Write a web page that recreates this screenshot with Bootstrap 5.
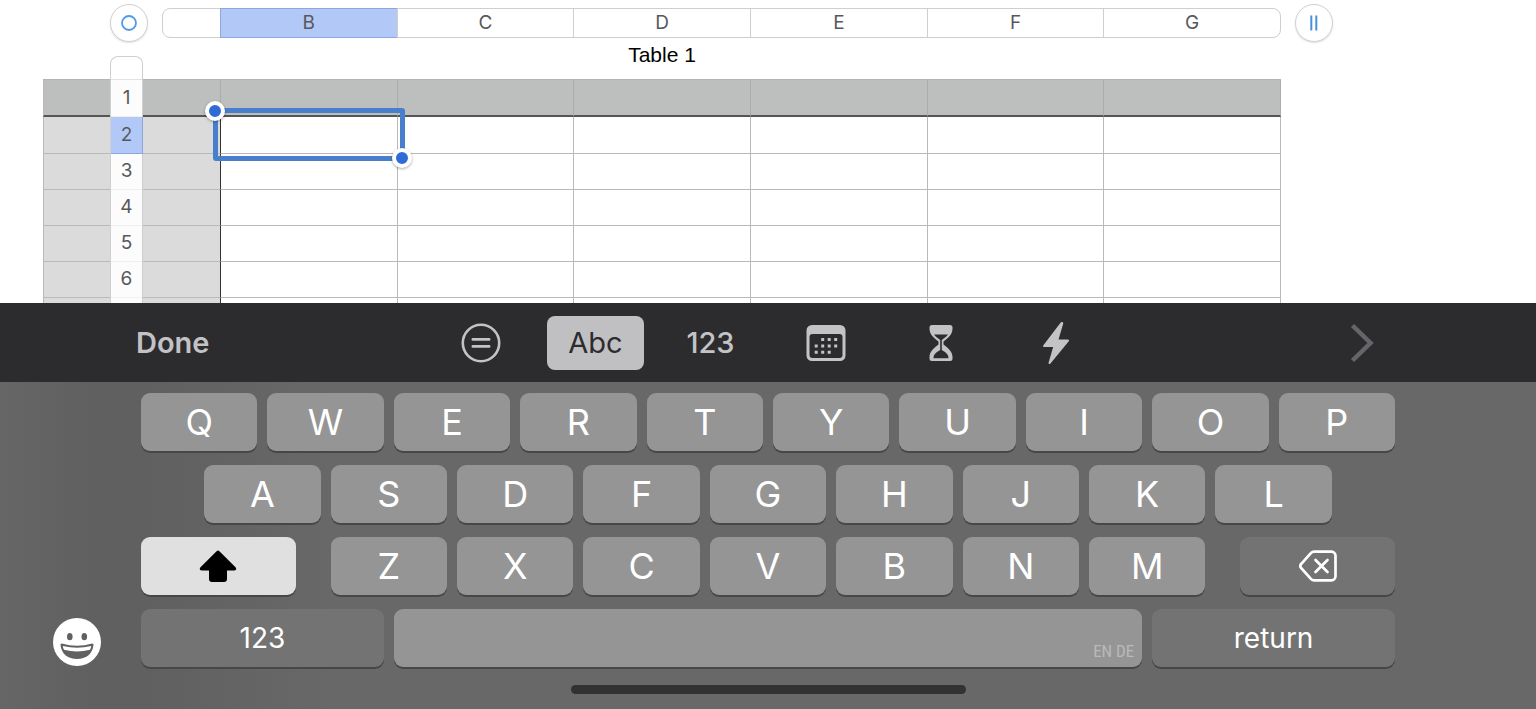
<!DOCTYPE html>
<html lang="en">
<head>
<meta charset="utf-8">
<meta name="viewport" content="width=device-width, initial-scale=1">
<title>Table 1</title>
<link href="https://cdn.jsdelivr.net/npm/bootstrap@5.3.0/dist/css/bootstrap.min.css" rel="stylesheet">
<style>
  body { font-family: Inter, Roboto, sans-serif; background: #fff; color: #58585c; }
  button { font-family: inherit; }

  /* Spreadsheet */
  .sheet { min-height: 0; }
  .ruler { padding: 4px 203px 0 110px; }
  .round-btn { width: 38px; height: 38px; background: #fff; border: 1px solid #d2d2d4; box-shadow: 0 1px 2px #0002; }
  .round-btn svg { flex-shrink: 0; }
  .columns-bar { height: 30px; margin: 0 14px; border: 1px solid #cfcfd1; border-radius: 8px; }
  .columns-bar button { border: 0; border-left: 1px solid #cfcfd1; background: transparent; color: inherit; font-size: 19px; line-height: 28px; flex: 1 1 0; min-width: 0; padding: 0; }
  .columns-bar button:first-child { flex: 0 0 57px; border-left: 0; }
  .columns-bar button.picked, .row-strip button.picked { background: #b2c9f8; border-color: #8ea6dc; box-shadow: 1px 0 0 #8ea6dc; }
  .columns-bar button.picked { box-shadow: 1px 0 0 #8ea6dc, 0 1px 0 #8ea6dc, 0 -1px 0 #8ea6dc; }
  .sheet-title { font: 21px/26px "Liberation Sans", sans-serif; color: #000; margin: 0 0 11px; }
  .grid-wrap { margin: 0 255px 0 43px; }
  .cells { width: 100%; table-layout: fixed; border-collapse: separate; border-spacing: 0; border-top: 1px solid #b4b5b4; }
  .cells th, .cells td { height: 36px; padding: 0; border: 0 solid #b9b9b9; border-width: 0 1px 1px 0; }
  .cells col:first-child { width: 178px; }
  .cells thead th { height: 37px; background: #bcbfbd; border-bottom: 2px solid #555; border-right-color: #abadac; }
  .cells tbody th { background: #dbdbdb; border-right-color: #333; }
  .cells tr > :first-child { border-left: 1px solid #b9b9b9; }
  .cells tbody tr:first-child > * { height: 37px; }
  .selection { inset: -9px -8px -8px -8px; border: 5px solid #477fcc; border-radius: 3px; z-index: 3; }
  .grip { width: 20px; height: 20px; border: 4px solid #fff; background: #2f6ad9; box-shadow: 0 1px 3px #0005; }
  .grip-start { left: -13px; top: -12px; }
  .grip-end { right: -12px; bottom: -12px; }
  .row-strip { left: 67px; top: -23px; width: 33px; border: 1px solid #cfcfd1; border-bottom: 0; border-radius: 8px 8px 0 0; background: #fcfcfc; z-index: 2; }
  .row-strip button { border: 0; border-bottom: 1px solid #f0f0f0; background: transparent; color: inherit; padding: 0; font-size: 19px; height: 36px; }
  .row-strip .strip-cap { height: 23px; border-bottom: 1px solid #e2e2e2; border-radius: 8px 8px 0 0; background: #fff; }
  .row-strip .tall { height: 37px; }

  /* Input toolbar */
  .input-bar { height: 79px; background: #2c2c2e; color: #c3c3c6; padding: 0 136px; }
  .input-bar button { border: 0; background: transparent; color: inherit; padding: 0; }
  .done { font-size: 29px; font-weight: 600; }
  .kinds { width: 690px; }
  .kind { flex: 1 1 0; height: 54px; font-size: 29px; font-weight: 500; }
  .kinds .chosen { width: 97px; height: 54px; border-radius: 8px; background: #c0c0c3; color: #2c2c2e; }
  .side { flex: 1 1 0; }
  .next-btn { margin-right: 24px; }

  /* Keyboard */
  .keyboard { background: #686868 linear-gradient(90deg, #666 0, #606060 90px, #606060 150px, #686868 330px); padding-top: 11px; }
  .gutter { flex: 0 0 141px; }
  .gutter button { border: 0; background: transparent; padding: 0; width: 48px; height: 48px; margin: 0 0 1px 53px; }
  .keys { display: grid; grid-template-columns: repeat(20, minmax(0, 1fr)); column-gap: 10px; row-gap: 14px; }
  .key { grid-column: span 2; height: 58px; border: 0; border-radius: 9px; padding: 0; background: #959595; color: #fff; font-size: 36px; font-weight: 400; line-height: 58px; box-shadow: 0 2px 0 #474747; }
  .key-inset { grid-column: 2 / span 2; }
  .key-edge { grid-column: span 3; }
  .key-shift { background: #e0e0e0; margin-right: 25px; }
  .key-dark { background: #737373; font-size: 28px; }
  .key-delete { margin-left: 25px; }
  .key-wide { grid-column: span 4; }
  .key-first { grid-column: 1 / span 4; }
  .key-space { grid-column: span 12; font: 17px/24px "Liberation Sans Narrow", "Roboto Condensed", sans-serif; color: #b9b9b9; }
  .key-row-start { grid-column: 1 / span 3; }
  .home-line { width: 395px; height: 9px; background: #323232; margin: 18px auto 15px; }
</style>
</head>
<body class="vh-100 d-flex flex-column overflow-hidden">

<main class="sheet flex-fill overflow-hidden">
  <div class="ruler d-flex align-items-center">
    <button class="round-btn rounded-circle p-0 flex-shrink-0 d-flex align-items-center justify-content-center" aria-label="Table options">
      <svg width="16" height="16" viewBox="0 0 16 16"><circle cx="8" cy="8" r="7" fill="none" stroke="#4f9be8" stroke-width="1.8"/></svg>
    </button>
    <div class="columns-bar d-flex flex-fill">
      <button aria-label="Column A"></button><button class="picked">B</button><button>C</button><button>D</button><button>E</button><button>F</button><button>G</button>
    </div>
    <button class="round-btn rounded-circle p-0 flex-shrink-0 d-flex align-items-center justify-content-center" aria-label="Add columns">
      <svg width="16" height="16" viewBox="0 0 16 16"><path d="M5.300 .5v15M10.300 .5v15" stroke="#4690dc" stroke-width="2"/></svg>
    </button>
  </div>
  <div class="grid-wrap">
    <h1 class="sheet-title text-center">Table 1</h1>
    <div class="position-relative">
      <table class="cells">
        <colgroup><col><col><col><col><col><col><col></colgroup>
        <thead><tr><th></th><th></th><th></th><th></th><th></th><th></th><th></th></tr></thead>
        <tbody>
          <tr><th></th><td class="position-relative"><div class="selection position-absolute"><span class="grip grip-start position-absolute rounded-circle"></span><span class="grip grip-end position-absolute rounded-circle"></span></div></td><td></td><td></td><td></td><td></td><td></td></tr>
          <tr><th></th><td></td><td></td><td></td><td></td><td></td><td></td></tr>
          <tr><th></th><td></td><td></td><td></td><td></td><td></td><td></td></tr>
          <tr><th></th><td></td><td></td><td></td><td></td><td></td><td></td></tr>
          <tr><th></th><td></td><td></td><td></td><td></td><td></td><td></td></tr>
          <tr><th></th><td></td><td></td><td></td><td></td><td></td><td></td></tr>
        </tbody>
      </table>
      <div class="row-strip position-absolute d-flex flex-column">
        <span class="strip-cap"></span>
        <button class="tall">1</button><button class="tall picked">2</button><button>3</button><button>4</button><button>5</button><button>6</button><button aria-label="Row 7"></button>
      </div>
    </div>
  </div>
</main>

<nav class="input-bar d-flex align-items-center flex-shrink-0" aria-label="Input type">
  <div class="side"><button class="done">Done</button></div>
  <div class="kinds d-flex align-items-center">
    <button class="kind d-flex align-items-center justify-content-center" aria-label="Formula"><svg width="40" height="40" viewBox="0 0 40 40" fill="none" stroke="currentColor" stroke-width="2.600"><circle cx="20" cy="20" r="18.200"/><path d="M11.800 16.400h16.400M11.800 23.400h16.400" stroke-linecap="round"/></svg></button>
    <div class="kind d-flex justify-content-center"><button class="chosen">Abc</button></div>
    <button class="kind">123</button>
    <button class="kind d-flex align-items-center justify-content-center" aria-label="Date"><svg width="40" height="36" viewBox="0 0 40 36" fill="currentColor"><path fill-rule="evenodd" d="M6 0h28a5.500 5.500 0 0 1 5.500 5.500v25a5.500 5.500 0 0 1-5.500 5.500H6A5.500 5.500 0 0 1 .5 30.500v-25A5.500 5.500 0 0 1 6 0zM6.500 9a3 3 0 0 0-3 3v18a3 3 0 0 0 3 3h27a3 3 0 0 0 3-3V12a3 3 0 0 0-3-3z"/><path d="M15.200 14.500h3M21.700 14.500h3M28.200 14.500h3M8.700 21h3M15.200 21h3M21.700 21h3M28.200 21h3M8.700 27.300h3M15.200 27.300h3M21.700 27.300h3" stroke="currentColor" stroke-width="3"/></svg></button>
    <button class="kind d-flex align-items-center justify-content-center" aria-label="Duration"><svg width="24" height="36" viewBox="0 0 24 36" fill="currentColor"><path fill-rule="evenodd" d="M3 0h18a2.500 2.500 0 0 1 2.500 2.500v1C23.500 9 20 12.500 14.500 16.500v3C20 23.500 23.500 27 23.500 32v1.500A2.500 2.500 0 0 1 21 36H3a2.500 2.500 0 0 1-2.500-2.500V32c0-5 3.500-8.500 9-12.500v-3C4 12.500.5 9 .5 3.500v-1A2.500 2.500 0 0 1 3 0zM5 9.500c1.500 2 3.500 3.500 6.200 5.600v10C8 27 4.500 29 4.500 33.300h15c0-4.300-3.500-6.300-6.700-8.200v-10c2.700-2.100 4.700-3.600 6.200-5.600z"/></svg></button>
    <button class="kind d-flex align-items-center justify-content-center" aria-label="Actions"><svg width="28" height="44" viewBox="0 0 28 44"><path d="M19.500 2 2 25h10.500L7.500 42 26 19.500H15.200L20.300 2.300z" fill="currentColor" stroke="currentColor" stroke-width="2" stroke-linejoin="round"/></svg></button>
  </div>
  <div class="side d-flex justify-content-end"><button class="next-btn" aria-label="Next"><svg class="d-block" width="28" height="40" viewBox="0 0 28 40" fill="none"><path d="M4.500 2.500 22.500 20 4.500 37.500" stroke="#66666a" stroke-width="4.500"/></svg></button></div>
</nav>

<section class="keyboard flex-shrink-0" aria-label="Keyboard">
  <div class="d-flex">
    <div class="gutter d-flex align-items-end">
      <button aria-label="Emoji"><svg class="d-block" width="48" height="48" viewBox="0 0 48 48"><circle cx="24" cy="24" r="24" fill="#fff"/><g fill="#616161"><ellipse cx="16.800" cy="18.700" rx="2.800" ry="3.600"/><ellipse cx="31.300" cy="18.700" rx="2.800" ry="3.600"/><path d="M8.800 25.400Q24 30.200 39.200 25.400Q40.700 25.300 40.500 27C39.500 36 33 41 24 41S8.500 36 7.500 27Q7.300 25.300 8.800 25.400z"/></g><path d="M9.800 28Q24 31.300 38.200 28Q38 30 37 31.800Q24 35 11 31.800Q10 30 9.800 28z" fill="#fff"/></svg></button>
    </div>
    <div class="keys flex-fill">
      <button class="key">Q</button><button class="key">W</button><button class="key">E</button><button class="key">R</button><button class="key">T</button><button class="key">Y</button><button class="key">U</button><button class="key">I</button><button class="key">O</button><button class="key">P</button>

      <button class="key key-inset">A</button><button class="key">S</button><button class="key">D</button><button class="key">F</button><button class="key">G</button><button class="key">H</button><button class="key">J</button><button class="key">K</button><button class="key">L</button>

      <button class="key key-row-start key-shift d-flex align-items-center justify-content-center" aria-label="Shift"><svg width="38" height="32" viewBox="0 0 38 32"><path d="M17.600 1.200a2 2 0 0 1 2.800 0L36.500 17.200c1.400 1.400.6 3.300-1.200 3.300H28v8.500a3 3 0 0 1-3 3H13a3 3 0 0 1-3-3v-8.500H2.700C.9 20.500.1 18.600 1.500 17.200z"/></svg></button>
      <button class="key">Z</button><button class="key">X</button><button class="key">C</button><button class="key">V</button><button class="key">B</button><button class="key">N</button><button class="key">M</button>
      <button class="key key-dark key-edge key-delete d-flex align-items-center justify-content-center" aria-label="Delete"><svg width="38" height="32" viewBox="0 0 38 32" fill="none" stroke="#fff" stroke-width="2.700" stroke-linecap="round" stroke-linejoin="round"><path d="M15 1.700h17.500a4 4 0 0 1 4 4v20.600a4 4 0 0 1-4 4H15a4 4 0 0 1-2.900-1.200L2.300 18.200a3.200 3.200 0 0 1 0-4.400L12.100 2.900A4 4 0 0 1 15 1.700z"/><path d="m16.500 10 12 12M28.500 10l-12 12"/></svg></button>

      <button class="key key-dark key-first">123</button>
      <button class="key key-space d-flex align-items-end justify-content-end pe-2 pb-1">EN DE</button>
      <button class="key key-dark key-wide">return</button>
    </div>
    <div class="gutter"></div>
  </div>
  <div class="home-line rounded-pill"></div>
</section>

<script src="https://cdn.jsdelivr.net/npm/bootstrap@5.3.0/dist/js/bootstrap.bundle.min.js"></script>
</body>
</html>
